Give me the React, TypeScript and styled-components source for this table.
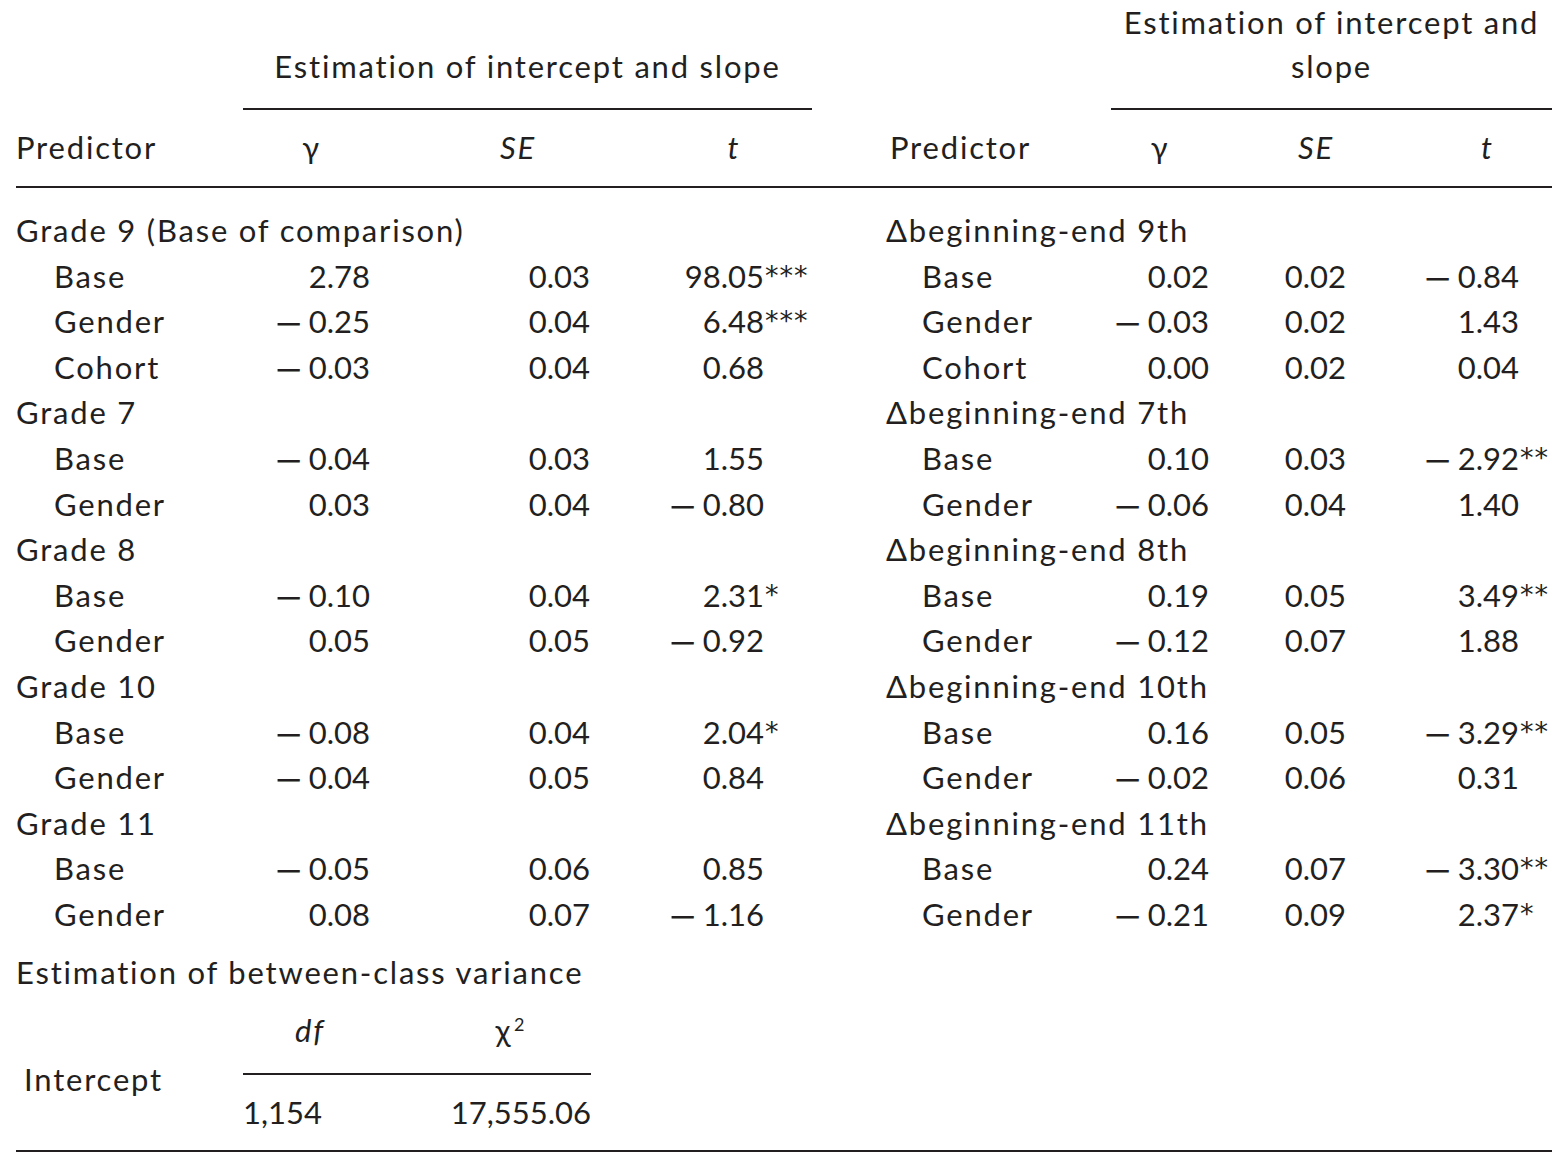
import React from 'react'
import styled, { createGlobalStyle } from 'styled-components'

const GlobalStyle = createGlobalStyle`
  html, body {
    margin: 0;
    padding: 0;
    background: #ffffff;
  }
  body {
    font-family: Lato, "Open Sans", "DejaVu Sans", sans-serif;
    color: #231f20;
  }
`

const INK = '#231f20'
const COLS = '227px 137px 276px 156px 299px 98px 214px 129px'

type Half = {
  label: string
  group?: boolean
  g?: string
  se?: string
  t?: string
  stars?: string
}

const left: Half[] = [
  { label: 'Grade 9 (Base of comparison)', group: true },
  { label: 'Base', g: '2.78', se: '0.03', t: '98.05', stars: '***' },
  { label: 'Gender', g: '-0.25', se: '0.04', t: '6.48', stars: '***' },
  { label: 'Cohort', g: '-0.03', se: '0.04', t: '0.68' },
  { label: 'Grade 7', group: true },
  { label: 'Base', g: '-0.04', se: '0.03', t: '1.55' },
  { label: 'Gender', g: '0.03', se: '0.04', t: '-0.80' },
  { label: 'Grade 8', group: true },
  { label: 'Base', g: '-0.10', se: '0.04', t: '2.31', stars: '*' },
  { label: 'Gender', g: '0.05', se: '0.05', t: '-0.92' },
  { label: 'Grade 10', group: true },
  { label: 'Base', g: '-0.08', se: '0.04', t: '2.04', stars: '*' },
  { label: 'Gender', g: '-0.04', se: '0.05', t: '0.84' },
  { label: 'Grade 11', group: true },
  { label: 'Base', g: '-0.05', se: '0.06', t: '0.85' },
  { label: 'Gender', g: '0.08', se: '0.07', t: '-1.16' },
]

const right: Half[] = [
  { label: '\u0394beginning-end 9th', group: true },
  { label: 'Base', g: '0.02', se: '0.02', t: '-0.84' },
  { label: 'Gender', g: '-0.03', se: '0.02', t: '1.43' },
  { label: 'Cohort', g: '0.00', se: '0.02', t: '0.04' },
  { label: '\u0394beginning-end 7th', group: true },
  { label: 'Base', g: '0.10', se: '0.03', t: '-2.92', stars: '**' },
  { label: 'Gender', g: '-0.06', se: '0.04', t: '1.40' },
  { label: '\u0394beginning-end 8th', group: true },
  { label: 'Base', g: '0.19', se: '0.05', t: '3.49', stars: '**' },
  { label: 'Gender', g: '-0.12', se: '0.07', t: '1.88' },
  { label: '\u0394beginning-end 10th', group: true },
  { label: 'Base', g: '0.16', se: '0.05', t: '-3.29', stars: '**' },
  { label: 'Gender', g: '-0.02', se: '0.06', t: '0.31' },
  { label: '\u0394beginning-end 11th', group: true },
  { label: 'Base', g: '0.24', se: '0.07', t: '-3.30', stars: '**' },
  { label: 'Gender', g: '-0.21', se: '0.09', t: '2.37', stars: '*' },
]

const Page = styled.div`
  width: 1536px;
  padding: 0 16px;
  font-size: 31px;
  letter-spacing: 1.8px;
`

const Table = styled.div`
  border-bottom: 2px solid ${INK};
`

const Row = styled.div`
  display: grid;
  grid-template-columns: ${COLS};
`

const SpanRow = styled(Row)`
  align-items: end;
`

const SpanHead = styled.div<{ $from: number }>`
  grid-column: ${(p) => p.$from} / span 3;
  text-align: center;
  line-height: 44px;
  padding-bottom: 20px;
  border-bottom: 2px solid ${INK};
`

const HeadRow = styled(Row)`
  line-height: 45px;
  padding: 15px 0 16px;
  border-bottom: 2px solid ${INK};
`

const HeadCell = styled.div<{ $italic?: boolean }>`
  text-align: center;
  font-style: ${(p) => (p.$italic ? 'italic' : 'normal')};
`

const Body = styled.div`
  padding-top: 20px;
`

const BodyRow = styled(Row)`
  height: 45.6px;
  line-height: 45.6px;
`

const Label = styled.div<{ $indent: number }>`
  padding-left: ${(p) => p.$indent}px;
  white-space: nowrap;
`

const Num = styled.div<{ $pad: number }>`
  text-align: right;
  padding-right: ${(p) => p.$pad}px;
  white-space: nowrap;
  letter-spacing: 0;
`

const TCell = styled.div<{ $star: number }>`
  display: grid;
  grid-template-columns: 1fr ${(p) => p.$star}px;
  white-space: nowrap;
  letter-spacing: 0;
`

const TValue = styled.span`
  text-align: right;
`

const Stars = styled.span`
  text-align: left;
  font-family: "DejaVu Sans", sans-serif;
  font-weight: 400;
  font-size: 27px;
  line-height: 1;
  letter-spacing: 1px;
  padding-left: 1px;
  padding-top: 8px;
`

const Minus = styled.span`
  display: inline-block;
  font-family: "DejaVu Sans", sans-serif;
  font-size: 28px;
  line-height: 1;
  margin-right: 5px;
  transform: scaleX(1.27);
  transform-origin: right center;
`

const VarTitle = styled.div`
  line-height: 45.6px;
  padding-top: 12px;
`

const VarGrid = styled.div`
  display: grid;
  grid-template-columns: 227px 134px 214px;
  padding-top: 13px;
  line-height: 45px;
`

const VarLabel = styled.div`
  grid-row: 1 / span 2;
  align-self: center;
  padding-left: 8px;
`

const VarHead = styled.div<{ $shift: number }>`
  text-align: center;
  padding-left: ${(p) => p.$shift}px;
  padding-bottom: 20px;
  border-bottom: 2px solid ${INK};
`

const Italic = styled.span`
  font-style: italic;
`

const Sup = styled.sup`
  font-size: 18px;
  line-height: 0;
  letter-spacing: 0;
  margin-left: 2px;
`

const VarValue = styled.div<{ $align: 'left' | 'right' }>`
  text-align: ${(p) => p.$align};
  padding: 15px 0 15px;
  letter-spacing: 0;
`

function Value({ v }: { v?: string }) {
  if (!v) return null
  if (v.startsWith('-')) {
    return (
      <>
        <Minus>{'\u2212'}</Minus>
        {v.slice(1)}
      </>
    )
  }
  return <>{v}</>
}

type Side = { label: [number, number]; g: number; se: number; star: number }

const LEFT: Side = { label: [0, 38], g: 10, se: 66, star: 48 }
const RIGHT: Side = { label: [74, 110], g: 0, se: 77, star: 33 }

function HalfCells({ h, side }: { h: Half; side: Side }) {
  return (
    <>
      <Label $indent={h.group ? side.label[0] : side.label[1]}>{h.label}</Label>
      <Num $pad={side.g}>
        <Value v={h.g} />
      </Num>
      <Num $pad={side.se}>
        <Value v={h.se} />
      </Num>
      <TCell $star={side.star}>
        <TValue>
          <Value v={h.t} />
        </TValue>
        <Stars>{h.stars ?? ''}</Stars>
      </TCell>
    </>
  )
}

export default function App() {
  return (
    <Page>
      <GlobalStyle />
      <Table>
        <SpanRow>
          <SpanHead $from={2}>Estimation of intercept and slope</SpanHead>
          <SpanHead $from={6}>
            Estimation of intercept and
            <br />
            slope
          </SpanHead>
        </SpanRow>
        <HeadRow>
          <Label $indent={0}>Predictor</Label>
          <HeadCell>γ</HeadCell>
          <HeadCell $italic>SE</HeadCell>
          <HeadCell $italic>t</HeadCell>
          <Label $indent={78}>Predictor</Label>
          <HeadCell>γ</HeadCell>
          <HeadCell $italic>SE</HeadCell>
          <HeadCell $italic>t</HeadCell>
        </HeadRow>
        <Body>
          {left.map((h, i) => (
            <BodyRow key={i}>
              <HalfCells h={h} side={LEFT} />
              <HalfCells h={right[i]} side={RIGHT} />
            </BodyRow>
          ))}
        </Body>
        <VarTitle>Estimation of between-class variance</VarTitle>
        <VarGrid>
          <VarLabel>Intercept</VarLabel>
          <VarHead $shift={0}>
            <Italic>df</Italic>
          </VarHead>
          <VarHead $shift={52}>
            χ<Sup>2</Sup>
          </VarHead>
          <VarValue $align="left">1,154</VarValue>
          <VarValue $align="right">17,555.06</VarValue>
        </VarGrid>
      </Table>
    </Page>
  )
}
